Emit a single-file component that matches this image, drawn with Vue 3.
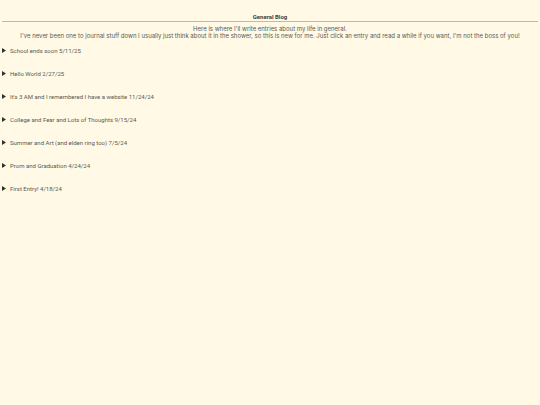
<script setup>
const entries = [
  'School ends soon 5/11/25',
  'Hello World 2/27/25',
  "It's 3 AM and I remembered I have a website 11/24/24",
  'College and Fear and Lots of Thoughts 9/15/24',
  'Summer and Art (and elden ring too) 7/5/24',
  'Prom and Graduation 4/24/24',
  'First Entry! 4/18/24',
]
</script>

<template>
  <main class="blog">
    <h1 class="title">General Blog</h1>
    <hr class="rule" />
    <p class="intro">
      Here is where I'll write entries about my life in general.<br />
      I've never been one to journal stuff down I usually just think about it in the shower, so this is new for me. Just click an entry and read a while if you want, I'm not the boss of you!
    </p>
    <div class="entries">
      <details v-for="entry in entries" :key="entry">
        <summary class="entry">
          <svg class="marker" viewBox="0 0 4 5" aria-hidden="true"><path d="M0 0L4 2.5L0 5Z" /></svg>
          <span>{{ entry }}</span>
        </summary>
      </details>
    </div>
  </main>
</template>

<style>
body {
  margin: 0;
  background: #fff9e6;
}
</style>

<style scoped>
.blog {
  padding: 13px 2px;
  color: #585953;
  font-family: Roboto, "Liberation Sans", sans-serif;
  font-size: 6px;
  line-height: 7px;
}
.title {
  margin: 0;
  font-size: 6px;
  font-weight: 700;
  color: #3c3f3a;
  text-align: center;
}
.rule {
  height: 1px;
  margin: 1px 0 3px;
  border: 0;
  background: #bdbba9;
}
.intro {
  margin: 0;
  font-family: Inter, "Liberation Sans", sans-serif;
  text-align: center;
}
.entries {
  display: flex;
  flex-direction: column;
  gap: 16px;
  margin-top: 8px;
}
.entry {
  display: flex;
  align-items: center;
  gap: 4px;
  list-style: none;
  cursor: pointer;
}
.entry::-webkit-details-marker {
  display: none;
}
.marker {
  width: 4px;
  height: 5px;
  fill: #30332f;
}
</style>
